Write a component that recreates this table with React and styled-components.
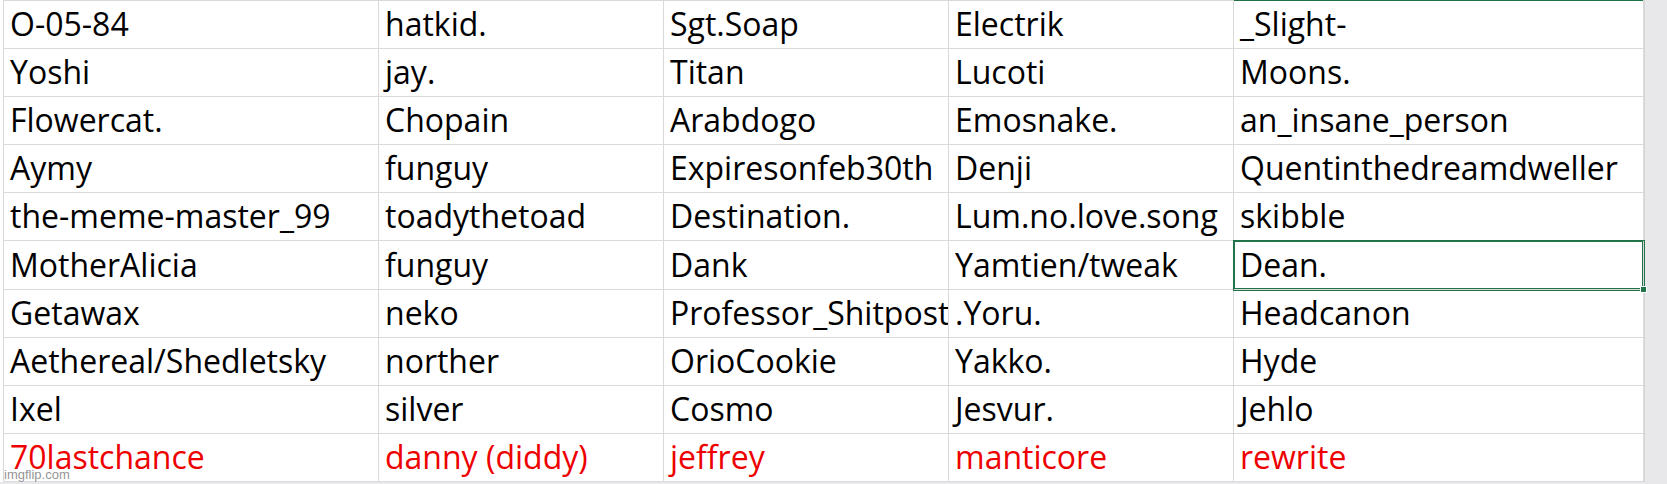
import React from "react";
import styled, { createGlobalStyle } from "styled-components";

const GlobalStyle = createGlobalStyle`
  html, body {
    margin: 0;
    padding: 0;
    background: #e8e7ea;
  }
  body {
    width: 1667px;
    height: 484px;
    overflow: hidden;
  }
`;

const Page = styled.div`
  position: relative;
  display: flex;
  flex-direction: column;
  width: 1667px;
  height: 484px;
  background: #e8e7ea;
`;

const Body = styled.div`
  display: flex;
  height: 482px;
`;

const Sheet = styled.div`
  width: 1644px;
  padding-left: 3px;
  box-sizing: border-box;
  background: #ffffff;
`;

const Gutter = styled.div`
  flex: 1;
  background: #e8e7ea;
  border-left: 1px solid #d6d5d8;
`;

const Grid = styled.div`
  display: grid;
  grid-template-columns: 375px 285px 285px 285px 410px;
  grid-template-rows: 48px 48px 48px 48px 48px 49px 48px 48px 48px 48px;
  border-left: 1px solid #d9d9d9;
  border-top: 1px solid #d9d9d9;
  background: #ffffff;
`;

const Cell = styled.div`
  position: relative;
  display: flex;
  align-items: flex-end;
  box-sizing: border-box;
  padding: 0 0 2px 6px;
  border-right: 1px solid #dadada;
  border-bottom: 1px solid #dadada;
  background: #ffffff;
  font-family: "Open Sans", "Liberation Sans", sans-serif;
  font-size: 32px;
  line-height: 44px;
  color: ${(p) => (p.$red ? "#ee0000" : "#000000")};
  white-space: nowrap;
  overflow: ${(p) => (p.$selected ? "visible" : "hidden")};
  box-shadow: ${(p) => (p.$head ? "inset 0 1px 0 #1f7244" : "none")};
  margin-top: ${(p) => (p.$head ? "-1px" : "0")};

  ${(p) =>
    p.$selected &&
    `
    z-index: 2;
    box-shadow: 0 0 0 1px #21734a, inset 0 0 0 1px #21734a;
    &::after {
      content: "";
      position: absolute;
      right: -4px;
      bottom: -4px;
      width: 5px;
      height: 5px;
      background: #21734a;
      border: 1px solid #ffffff;
    }
  `}
`;

const Watermark = styled.span`
  position: absolute;
  left: 4px;
  bottom: 2px;
  font-family: "Liberation Sans", Arial, sans-serif;
  font-size: 13px;
  color: rgba(110, 110, 110, 0.75);
  text-shadow: 0 0 2px rgba(255, 255, 255, 0.9);
  z-index: 3;
`;

const rows = [
  ["O-05-84", "hatkid.", "Sgt.Soap", "Electrik", "_Slight-"],
  ["Yoshi", "jay.", "Titan", "Lucoti", "Moons."],
  ["Flowercat.", "Chopain", "Arabdogo", "Emosnake.", "an_insane_person"],
  ["Aymy", "funguy", "Expiresonfeb30th", "Denji", "Quentinthedreamdweller"],
  ["the-meme-master_99", "toadythetoad", "Destination.", "Lum.no.love.song", "skibble"],
  ["MotherAlicia", "funguy", "Dank", "Yamtien/tweak", "Dean."],
  ["Getawax", "neko", "Professor_Shitpost", ".Yoru.", "Headcanon"],
  ["Aethereal/Shedletsky", "norther", "OrioCookie", "Yakko.", "Hyde"],
  ["Ixel", "silver", "Cosmo", "Jesvur.", "Jehlo"],
  ["70lastchance", "danny (diddy)", "jeffrey", "manticore", "rewrite"],
];

export default function App() {
  return (
    <>
      <GlobalStyle />
      <Page>
        <Body>
          <Sheet>
            <Grid>
              {rows.map((row, r) =>
                row.map((text, c) => (
                  <Cell
                    key={`${r}-${c}`}
                    $red={r === 9}
                    $head={r === 0 && c === 4}
                    $selected={r === 5 && c === 4}
                  >
                    {text}
                  </Cell>
                ))
              )}
            </Grid>
          </Sheet>
          <Gutter />
        </Body>
        <Watermark>imgflip.com</Watermark>
      </Page>
    </>
  );
}
